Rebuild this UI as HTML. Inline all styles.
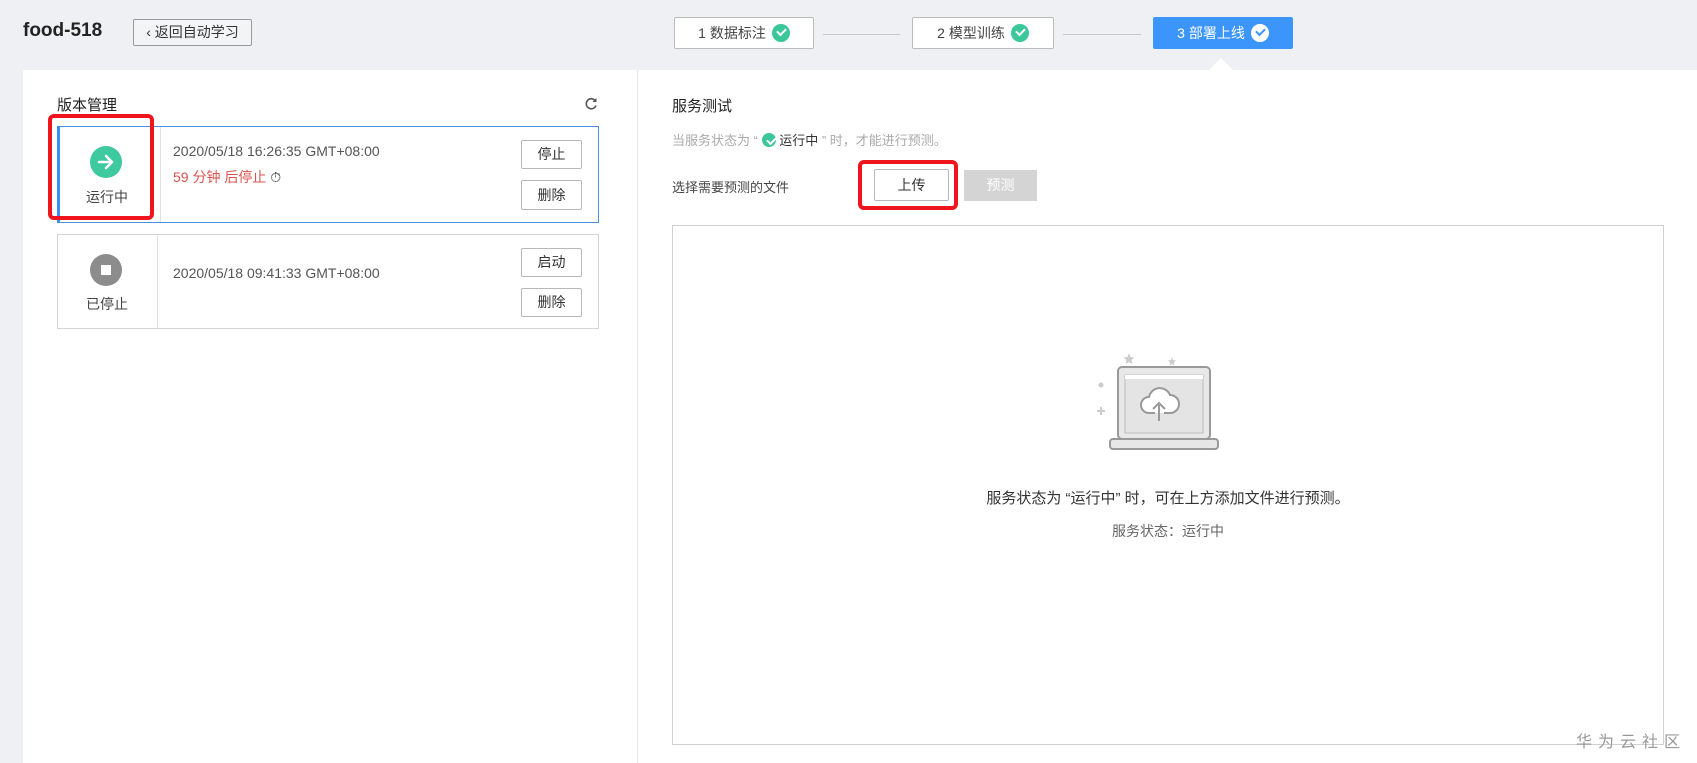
<!DOCTYPE html>
<html><head><meta charset="utf-8"><style>
*{box-sizing:border-box;margin:0;padding:0}
body{width:1697px;height:763px;overflow:hidden;background:#eef0f4;font-family:"Liberation Sans","Noto Sans CJK SC",sans-serif;color:#333;position:relative}
.a{position:absolute}
.btn{position:absolute;border:1px solid #b8b8b8;background:#fff;font-size:14px;text-align:center;color:#333;border-radius:2px}
.step{position:absolute;top:17px;height:32px;border:1px solid #bbb;background:#fff;border-radius:2px;font-size:14px;color:#444;display:flex;align-items:center;justify-content:center;gap:6px}
.chk{width:18px;height:18px;border-radius:50%;background:#3cc79b;display:inline-block;position:relative}
.chk:after{content:"";position:absolute;left:5px;top:4px;width:7px;height:4px;border-left:2px solid #fff;border-bottom:2px solid #fff;transform:rotate(-45deg)}
.chk.w{background:#fff}
.chk.w:after{border-color:#3b95fb}
.line{position:absolute;top:34px;height:1px;background:#c8c8c8}
.card{position:absolute;left:57px;width:542px;background:#fff}
.red{position:absolute;border:4px solid #f0141e;border-radius:6px}
</style></head><body>
<div class="a" style="left:23px;top:20px;font-size:19px;font-weight:bold;color:#222">food-518</div>
<div class="btn" style="left:133px;top:19px;width:119px;height:27px;line-height:25px;border-color:#999;background:#f3f4f6;font-size:14px">‹ 返回自动学习</div>
<div class="step" style="left:674px;width:140px">1 数据标注 <span class="chk"></span></div>
<div class="line" style="left:823px;width:77px"></div>
<div class="step" style="left:912px;width:142px">2 模型训练 <span class="chk"></span></div>
<div class="line" style="left:1063px;width:78px"></div>
<div class="step" style="left:1153px;width:140px;background:#3b95fb;border-color:#3b95fb;color:#fff">3 部署上线 <span class="chk w"></span></div>
<div class="a" style="left:1209px;top:58px;width:0;height:0;border-left:12px solid transparent;border-right:12px solid transparent;border-bottom:12px solid #fff"></div>
<div class="a" style="left:23px;top:70px;width:1674px;height:693px;background:#fff"></div>
<div class="a" style="left:637px;top:70px;width:1px;height:693px;background:#e6e6e6"></div>

<div class="a" style="left:57px;top:94px;font-size:15px;color:#222">版本管理</div>
<svg class="a" style="left:584px;top:97px" width="14" height="14" viewBox="0 0 14 14"><path d="M11.5 4A5 5 0 1 0 12 8.5" fill="none" stroke="#555" stroke-width="1.6"/><path d="M12.5 1v4h-4z" fill="#555"/></svg>

<div class="card" style="top:126px;height:97px;border:1px solid #4a90e2;border-left:3px solid #3b8ff0">
 <div class="a" style="left:100px;top:0;width:1px;height:95px;background:#e0e0e0"></div>
</div>
<svg class="a" style="left:90px;top:146px" width="32" height="32"><circle cx="16" cy="16" r="16" fill="#3ec99e"/><path d="M9 16h13M16 10l6 6-6 6" fill="none" stroke="#fff" stroke-width="2.6" stroke-linecap="round" stroke-linejoin="round"/></svg>
<div class="a" style="left:86px;top:187px;font-size:14px;color:#444">运行中</div>
<div class="a" style="left:173px;top:143px;font-size:14px;color:#555">2020/05/18 16:26:35 GMT+08:00</div>
<div class="a" style="left:173px;top:167px;font-size:14px;color:#d9534f">59 分钟 后停止 <span style="color:#333">⏱</span></div>
<div class="btn" style="left:521px;top:140px;width:61px;height:29px;line-height:27px">停止</div>
<div class="btn" style="left:521px;top:180px;width:61px;height:30px;line-height:28px">删除</div>

<div class="card" style="top:234px;height:95px;border:1px solid #d4d4d4">
 <div class="a" style="left:99px;top:0;width:1px;height:93px;background:#e0e0e0"></div>
</div>
<svg class="a" style="left:90px;top:254px" width="32" height="32"><circle cx="16" cy="16" r="16" fill="#8c8c8c"/><rect x="11" y="11" width="10" height="10" fill="#fff"/></svg>
<div class="a" style="left:86px;top:294px;font-size:14px;color:#444">已停止</div>
<div class="a" style="left:173px;top:265px;font-size:14px;color:#555">2020/05/18 09:41:33 GMT+08:00</div>
<div class="btn" style="left:521px;top:248px;width:61px;height:29px;line-height:27px">启动</div>
<div class="btn" style="left:521px;top:288px;width:61px;height:29px;line-height:27px">删除</div>
<div class="red" style="left:48px;top:114px;width:106px;height:106px"></div>

<div class="a" style="left:672px;top:95px;font-size:15px;color:#222">服务测试</div>
<div class="a" style="left:672px;top:130px;font-size:13px;color:#aaa">当服务状态为 “ <span class="chk" style="width:14px;height:14px;vertical-align:-2px"></span> <span style="color:#333">运行中</span> ” 时，才能进行预测。</div>
<div class="a" style="left:672px;top:177px;font-size:13px;color:#444">选择需要预测的文件</div>
<div class="btn" style="left:874px;top:169px;width:75px;height:32px;line-height:30px">上传</div>
<div class="a" style="left:964px;top:170px;width:73px;height:31px;background:#d4d4d4;color:#fff;font-size:14px;text-align:center;line-height:31px">预测</div>
<div class="red" style="left:858px;top:160px;width:100px;height:50px"></div>

<div class="a" style="left:672px;top:225px;width:992px;height:520px;border:1px solid #d0d0d0"></div>
<svg class="a" style="left:1095px;top:345px" width="140" height="110" viewBox="0 0 140 110">
 <g fill="#ccc"><circle cx="6" cy="40" r="2.5"/><path d="M34 8l1.5 4 4 .5-3 2.5 1 4-3.5-2-3.5 2 1-4-3-2.5 4-.5z"/><path d="M77 12l1 3 3 .5-2 2 .5 3-2.5-1.5-2.5 1.5.5-3-2-2 3-.5z"/><path d="M108 34l1 3 3 .5-2 2 .5 3-2.5-1.5-2.5 1.5.5-3-2-2 3-.5z"/><circle cx="113" cy="82" r="2.5"/><path d="M2 66h8M6 62v8" stroke="#ccc" stroke-width="2"/><path d="M102 56l1 2.5 2.5.5-2 1.5.5 2.5-2-1-2 1 .5-2.5-2-1.5 2.5-.5z"/></g>
 <rect x="23" y="22" width="92" height="72" rx="4" fill="#e8e8e8" stroke="#999" stroke-width="2"/>
 <rect x="30" y="30" width="78" height="58" fill="#e4e4e4" stroke="#bbb"/>
 <rect x="30" y="30" width="78" height="4" fill="#fff"/>
 <rect x="15" y="94" width="108" height="10" rx="3" fill="#e6e6e6" stroke="#999" stroke-width="2"/>
 <path d="M60 68h-6a8 8 0 0 1 0-16a11 11 0 0 1 21-2a8 8 0 0 1 0 18h-6" fill="#fff" stroke="#999" stroke-width="2"/>
 <path d="M64 76v-16M58 64l6-6 6 6" fill="none" stroke="#999" stroke-width="2"/>
</svg>
<div class="a" style="left:672px;top:487px;width:992px;text-align:center;font-size:15px;color:#333">服务状态为 “运行中” 时，可在上方添加文件进行预测。</div>
<div class="a" style="left:672px;top:521px;width:992px;text-align:center;font-size:14px;color:#666">服务状态：运行中</div>
<div class="a" style="left:1576px;top:728px;font-size:16px;color:#999;letter-spacing:6px">华为云社区</div>
</body></html>
